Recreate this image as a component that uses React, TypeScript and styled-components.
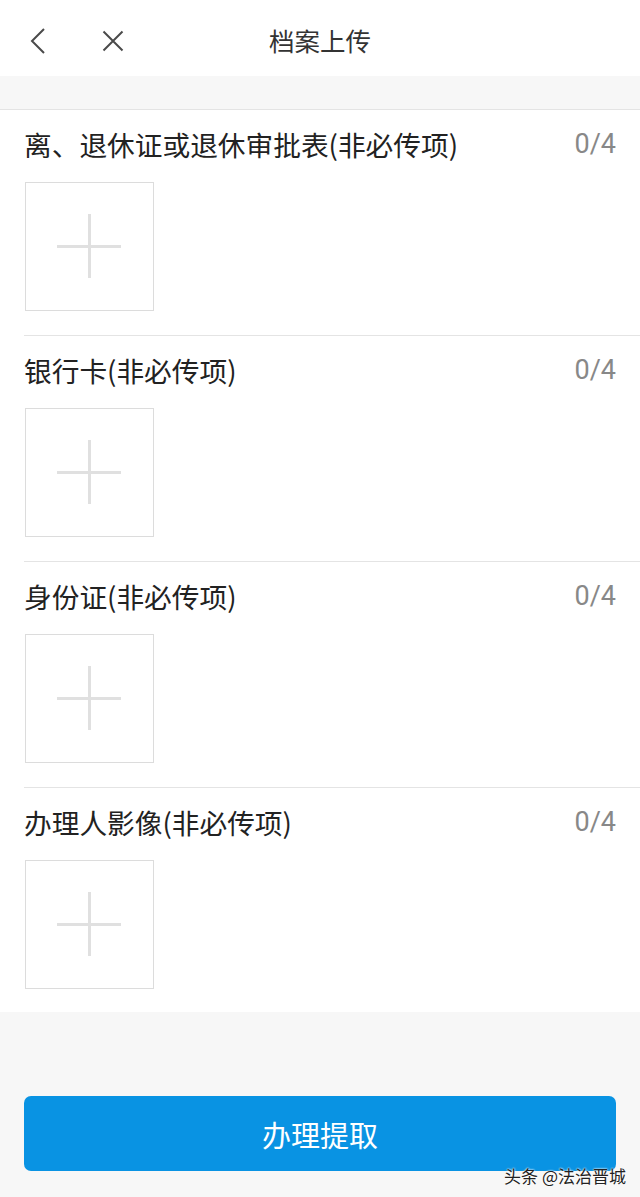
import React from 'react'
import styled, { createGlobalStyle } from 'styled-components'

const sections = [
  { title: '离、退休证或退休审批表(非必传项)', count: 0, max: 4 },
  { title: '银行卡(非必传项)', count: 0, max: 4 },
  { title: '身份证(非必传项)', count: 0, max: 4 },
  { title: '办理人影像(非必传项)', count: 0, max: 4 },
]

export default function App() {
  return (
    <Page>
      <GlobalStyle />
      <Header>
        <NavButtons>
          <IconButton aria-label="back">
            <svg width="16" height="26" viewBox="0 0 16 26">
              <path d="M14 1 L2 13 L14 25" fill="none" stroke="#4a4a4a" strokeWidth="2" />
            </svg>
          </IconButton>
          <IconButton aria-label="close">
            <svg width="22" height="22" viewBox="0 0 22 22">
              <path d="M1.5 1.5 L20.5 20.5 M20.5 1.5 L1.5 20.5" fill="none" stroke="#4a4a4a" strokeWidth="2" />
            </svg>
          </IconButton>
        </NavButtons>
        <HeaderTitle>档案上传</HeaderTitle>
      </Header>
      <Spacer />
      <SectionList>
        {sections.map((s, idx) => (
          <Section key={idx} last={idx === sections.length - 1}>
            <SectionHead>
              <SectionTitle>{s.title}</SectionTitle>
              <Count>
                {s.count}/{s.max}
              </Count>
            </SectionHead>
            <UploadBox>
              <PlusV />
              <PlusH />
            </UploadBox>
          </Section>
        ))}
      </SectionList>
      <Footer>
        <SubmitButton>办理提取</SubmitButton>
        <Watermark>头条 @法治晋城</Watermark>
      </Footer>
    </Page>
  )
}

const GlobalStyle = createGlobalStyle`
  html, body {
    margin: 0;
    padding: 0;
    background: #f7f7f7;
  }
  body {
    font-family: "Noto Sans CJK SC", "Noto Sans", sans-serif;
  }
`

const Page = styled.div`
  width: 640px;
  height: 1197px;
  background: #f7f7f7;
  display: flex;
  flex-direction: column;
  overflow: hidden;
`

const Header = styled.div`
  position: relative;
  height: 76px;
  background: #fff;
  display: flex;
  align-items: center;
  justify-content: center;
`

const NavButtons = styled.div`
  position: absolute;
  left: 30px;
  top: 0;
  height: 82px;
  display: flex;
  align-items: center;
  gap: 56px;
`

const IconButton = styled.button`
  background: transparent;
  border: none;
  padding: 0;
  display: flex;
  align-items: center;
`

const HeaderTitle = styled.div`
  font-size: 25.5px;
  color: #333;
  margin-top: 3px;
`

const Spacer = styled.div`
  height: 33px;
`

const SectionList = styled.div`
  background: #fff;
  border-top: 1px solid #e4e4e4;
  padding-left: 24px;
`

const Section = styled.div<{ last: boolean }>`
  padding-bottom: ${(p) => (p.last ? '23px' : '24px')};
  border-bottom: ${(p) => (p.last ? 'none' : '1px solid #e4e4e4')};
`

const SectionHead = styled.div`
  height: 72px;
  display: flex;
  align-items: center;
  justify-content: space-between;
  padding-right: 24px;
  padding-bottom: 5px;
  box-sizing: border-box;
`

const SectionTitle = styled.div`
  font-size: 27.7px;
  color: #222;
`

const Count = styled.div`
  font-family: Roboto, "Noto Sans", sans-serif;
  font-size: 27px;
  color: #888;
`

const UploadBox = styled.div`
  position: relative;
  width: 127px;
  height: 127px;
  margin-left: 1px;
  border: 1px solid #dcdcdc;
`

const PlusV = styled.div`
  position: absolute;
  left: 62px;
  top: 31px;
  width: 3px;
  height: 64px;
  background: #e0e0e0;
`

const PlusH = styled.div`
  position: absolute;
  left: 31px;
  top: 62px;
  width: 64px;
  height: 3px;
  background: #e0e0e0;
`

const Footer = styled.div`
  position: relative;
  flex: 1;
  padding: 84px 24px 0;
`

const SubmitButton = styled.button`
  width: 100%;
  height: 75px;
  border: none;
  border-radius: 7px;
  background: #0993e3;
  color: #fff;
  font-family: "Noto Sans CJK SC", sans-serif;
  font-size: 29px;
`

const Watermark = styled.div`
  position: absolute;
  right: 14px;
  top: 151px;
  font-size: 17px;
  color: #222;
  text-shadow: 0 0 2px #fff, 0 0 2px #fff;
`
